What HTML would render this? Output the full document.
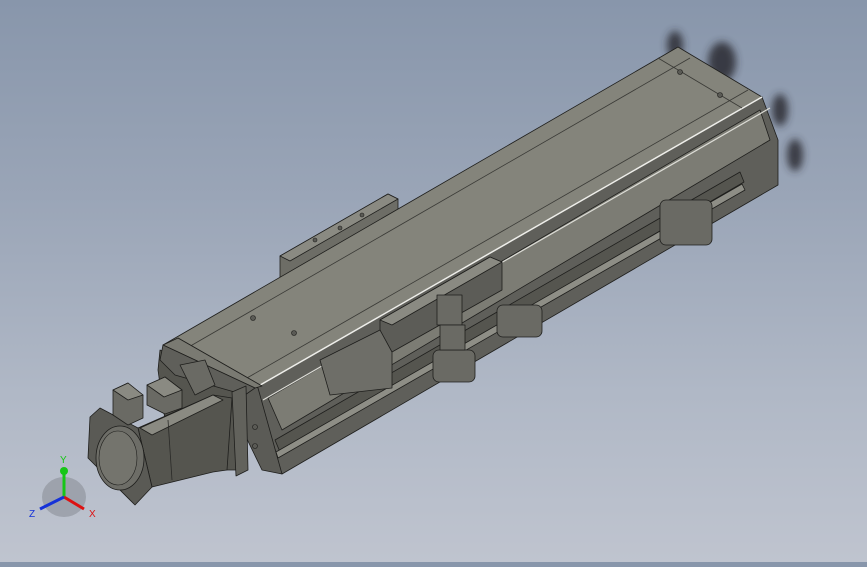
<!DOCTYPE html>
<html><head><style>
html,body{margin:0;padding:0}
body{width:867px;height:562px;overflow:hidden;background:linear-gradient(180deg,#8896ab 0%,#9aa5b7 35%,#b0b8c6 70%,#bfc4cf 100%);font-family:"Liberation Sans",sans-serif}
</style></head><body>
<svg width="867" height="562" viewBox="0 0 867 562" xmlns="http://www.w3.org/2000/svg">
<defs>
<filter id="bl"><feGaussianBlur stdDeviation="4"/></filter>
</defs>
<g filter="url(#bl)" fill="#2a2c30" opacity="0.85">
<ellipse cx="675" cy="45" rx="8" ry="14"/>
<ellipse cx="722" cy="62" rx="14" ry="20"/>
<ellipse cx="780" cy="110" rx="8" ry="16"/>
<ellipse cx="795" cy="155" rx="8" ry="16"/>
</g>
<g stroke="#1e1e1c" stroke-width="0.8" stroke-linejoin="round">
<polygon points="280,256 388,194 398,199 398,222 290,284 280,278" fill="#6d6d66"/>
<polygon points="280,256 388,194 398,199 290,261" fill="#8a8a82"/>
<polygon points="255,388 762,97 778,140 778,185 282,474 266,430" fill="#5f5f5a"/>
<polygon points="268,398 760,110 770,140 282,430" fill="#7c7c74"/>
<polygon points="275,440 740,172 744,182 280,452" fill="#55554f"/>
<polygon points="276,452 742,184 745,190 278,458" fill="#8e8e86"/>
<polygon points="163,345 678,47 762,97 255,388" fill="#84847b"/>
<line x1="180" y1="352" x2="690" y2="58" stroke="#3a3a36"/>
<line x1="240" y1="382" x2="748" y2="90" stroke="#3a3a36"/>
<polyline points="255,388 762,97" stroke="#eeeeea" stroke-width="1.5" fill="none"/>
<line x1="263" y1="400" x2="770" y2="108" stroke="#dcdcd6" stroke-width="1.2"/>
<line x1="658" y1="58" x2="742" y2="108" stroke="#3a3a36"/>
<line x1="178" y1="338" x2="262" y2="386" stroke="#3a3a36"/>
<polygon points="380,320 490,257 502,262 502,290 392,352 380,346" fill="#5c5c57"/>
<polygon points="380,320 490,257 502,262 392,325" fill="#8a8a82"/>
<polygon points="320,360 380,330 392,352 392,388 330,395" fill="#6e6e68"/>
<g fill="#6a6a64">
<rect x="433" y="350" width="42" height="32" rx="6"/>
<rect x="497" y="305" width="45" height="32" rx="6"/>
<rect x="660" y="200" width="52" height="45" rx="6"/>
<rect x="437" y="295" width="25" height="30"/>
<rect x="440" y="325" width="25" height="25"/>
</g>
<!-- front end face -->
<polygon points="160,350 245,385 247,470 200,470 165,420 158,370" fill="#55554f"/>
<polygon points="240,378 258,388 282,474 262,470 245,435" fill="#5b5b56"/>
<polygon points="163,345 178,338 262,386 255,388" fill="#7a7a72"/>
<polygon points="163,345 255,388 245,395 175,375 160,360" fill="#5f5f5a"/>
<polygon points="232,392 246,386 248,470 236,476" fill="#62625c"/>
<polygon points="180,365 205,360 215,385 195,395" fill="#6a6a64"/>
<!-- motor body -->
<polygon points="138,428 213,395 232,398 227,470 213,472 152,487" fill="#55554f"/>
<polygon points="140,428 213,395 223,400 152,435" fill="#8a8a82"/>
<line x1="168" y1="420" x2="172" y2="480" stroke="#2a2a28"/>
<polygon points="90,417 100,408 138,428 152,487 135,505 88,458" fill="#5a5a55"/>
<ellipse cx="120" cy="458" rx="24" ry="32" fill="#6d6d67"/>
<ellipse cx="118" cy="458" rx="19" ry="27" fill="#74746d" stroke-width="0.6"/>
<polygon points="113,390 128,383 143,395 143,418 128,425 113,415" fill="#6a6a64"/>
<polygon points="113,390 128,383 143,395 128,400" fill="#8a8a82"/>
<polygon points="147,385 165,377 182,390 182,408 165,414 147,405" fill="#6a6a64"/>
<polygon points="147,385 165,377 182,390 164,397" fill="#8a8a82"/>
</g>
<g fill="#5a5a55" stroke="#1e1e1c" stroke-width="0.6">
<circle cx="680" cy="72" r="2.5"/><circle cx="720" cy="95" r="2.5"/>
<circle cx="253" cy="318" r="2.5"/><circle cx="294" cy="333" r="2.5"/>
<circle cx="255" cy="427" r="2.5"/><circle cx="255" cy="446" r="2.5"/>
<circle cx="315" cy="240" r="2"/><circle cx="340" cy="228" r="2"/><circle cx="362" cy="215" r="2"/>
</g>
<ellipse cx="64" cy="497" rx="22" ry="20" fill="#8a8f98" opacity="0.6"/>
<line x1="64" y1="497" x2="64" y2="472" stroke="#17c617" stroke-width="3"/>
<circle cx="64" cy="471" r="4" fill="#17c617"/>
<line x1="64" y1="497" x2="84" y2="509" stroke="#d11" stroke-width="3"/>
<line x1="64" y1="497" x2="40" y2="509" stroke="#1532d8" stroke-width="3"/>
<text x="60" y="463" font-size="10" fill="#17c617">Y</text>
<text x="89" y="517" font-size="10" fill="#d11">X</text>
<text x="29" y="517" font-size="10" fill="#1532d8">Z</text>
</svg>
</body></html>
